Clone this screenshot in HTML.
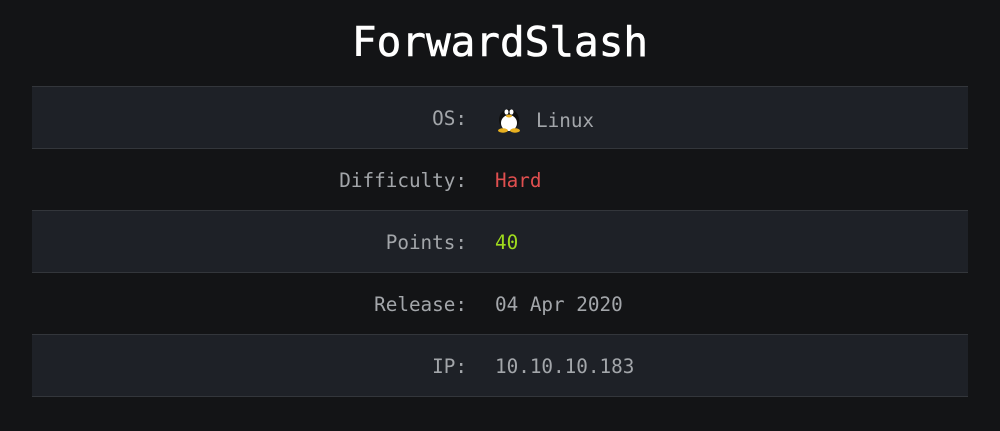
<!DOCTYPE html>
<html><head><style>
html,body{margin:0;padding:0;background:#131416;width:1000px;height:431px;overflow:hidden;font-family:"DejaVu Sans Mono","Liberation Mono",monospace;}
h1{position:absolute;top:14px;left:0;width:1000px;text-align:center;margin:0;color:#fff;font-size:41px;font-weight:normal;line-height:56px;-webkit-text-stroke:0.6px #fff;}
table{position:absolute;top:86px;left:32px;width:936px;border-collapse:collapse;}
td{height:62px;box-sizing:border-box;border-top:1px solid #33363b;font-size:19.3px;color:#a3a6aa;padding:0;padding-top:2px;}
tr:last-child td{border-bottom:1px solid #33363b;}
tr.a td{background:#1e2127;}
td.l{text-align:right;width:463px;padding-right:28px;}
</style></head><body>
<h1>ForwardSlash</h1>
<table>
<tr class="a"><td class="l">OS:</td><td><svg width="28" height="28" viewBox="0 0 28 28" style="vertical-align:-6px;margin-right:13px"><ellipse cx="14" cy="15" rx="10" ry="11" fill="#111"/><ellipse cx="14" cy="18" rx="8" ry="8" fill="#fff"/><ellipse cx="11.5" cy="7" rx="2" ry="2.6" fill="#fff"/><ellipse cx="16.5" cy="7" rx="2" ry="2.6" fill="#fff"/><ellipse cx="14" cy="11" rx="3" ry="1.5" fill="#e8b020"/><ellipse cx="8" cy="25.5" rx="5" ry="2.2" fill="#e8b020"/><ellipse cx="20" cy="25.5" rx="5" ry="2.2" fill="#e8b020"/></svg>Linux</td></tr>
<tr><td class="l">Difficulty:</td><td style="color:#e04f4f">Hard</td></tr>
<tr class="a"><td class="l">Points:</td><td style="color:#9fdb1d">40</td></tr>
<tr><td class="l">Release:</td><td>04 Apr 2020</td></tr>
<tr class="a"><td class="l">IP:</td><td>10.10.10.183</td></tr>
</table>
</body></html>
